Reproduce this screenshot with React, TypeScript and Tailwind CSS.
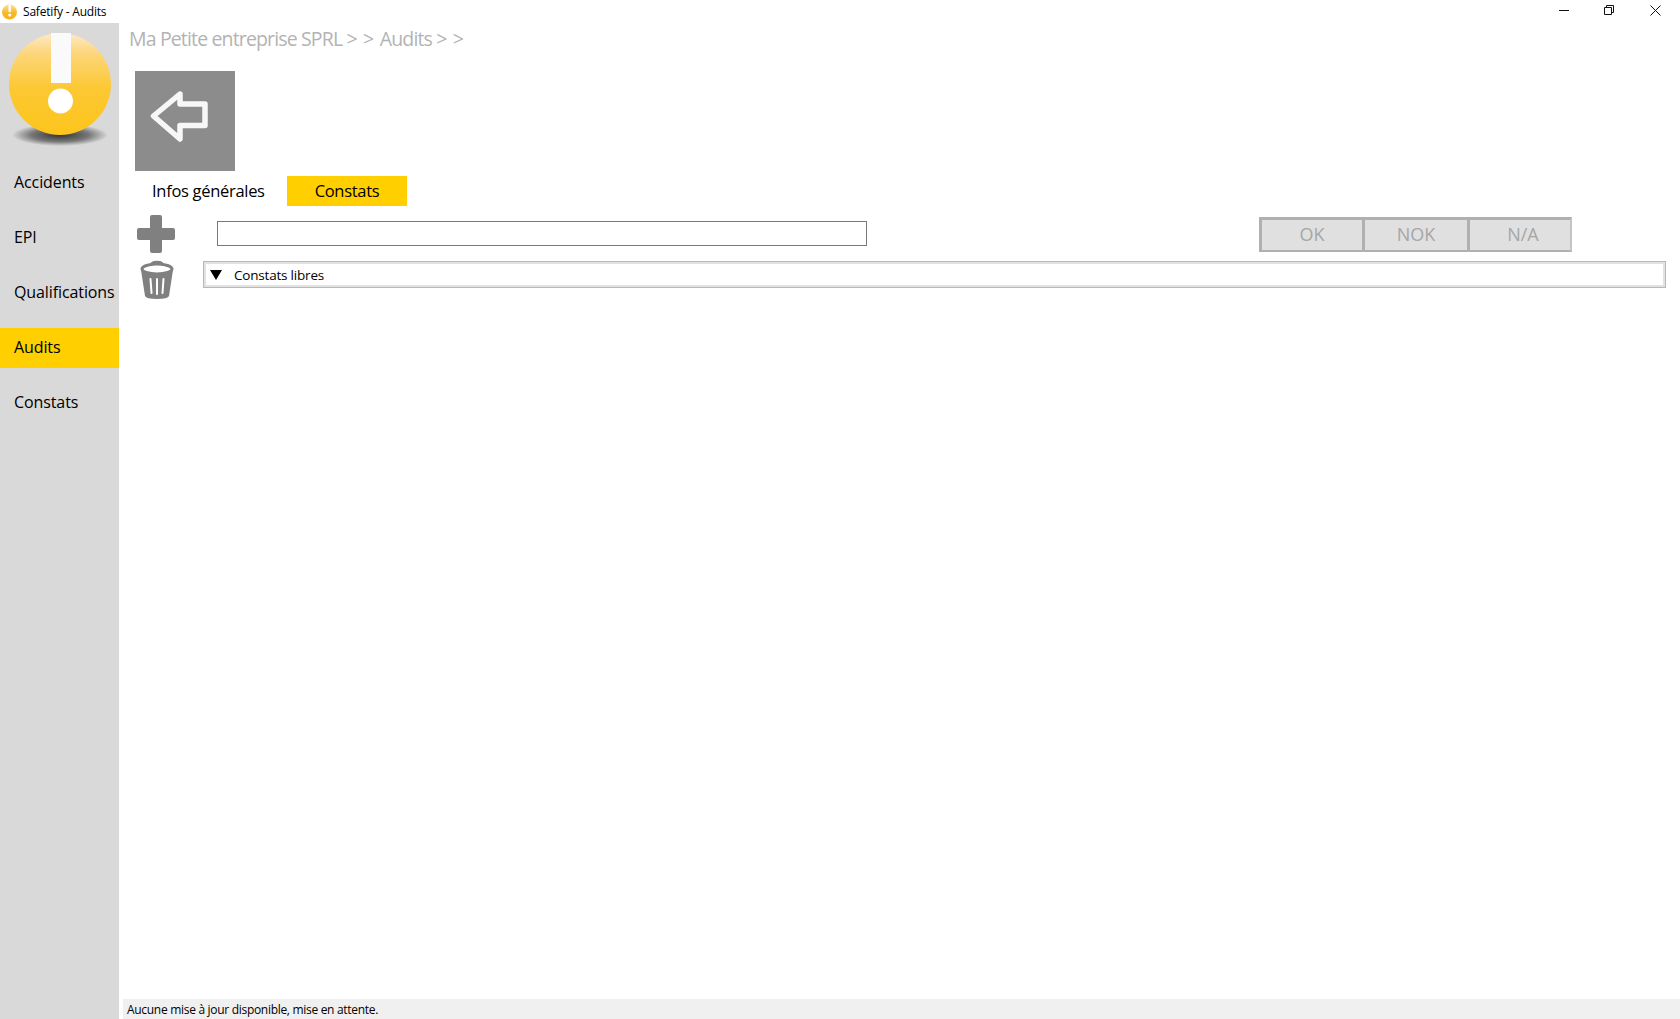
const font = { fontFamily: '"Open Sans", "Noto Sans", sans-serif' };

const navItems = ['Accidents', 'EPI', 'Qualifications', 'Audits', 'Constats'];

function LogoSmall() {
  return (
    <svg width="17" height="17" viewBox="0 0 17 17" className="ml-[1px]">
      <defs>
        <linearGradient id="small" x1="0" y1="0" x2="0" y2="1">
          <stop offset="0" stopColor="#fde3a5" />
          <stop offset="0.5" stopColor="#f9bb2c" />
          <stop offset="1" stopColor="#f5b01a" />
        </linearGradient>
      </defs>
      <circle cx="8.5" cy="9" r="7.5" fill="url(#small)" />
      <rect x="7.5" y="2" width="2.4" height="7" fill="#fff" />
      <circle cx="8.7" cy="12" r="1.6" fill="#fff" />
    </svg>
  );
}

function Logo() {
  return (
    <svg width="119" height="124" viewBox="0 0 119 124" className="block">
      <defs>
        <linearGradient id="ball" x1="0" y1="0" x2="0" y2="1">
          <stop offset="0" stopColor="#fde9c8" />
          <stop offset="0.2" stopColor="#fdd67a" />
          <stop offset="0.55" stopColor="#fcc832" />
          <stop offset="1" stopColor="#fcc51c" />
        </linearGradient>
        <radialGradient id="shadow" cx="0.5" cy="0.5" r="0.5">
          <stop offset="0" stopColor="#333" />
          <stop offset="0.6" stopColor="#777" />
          <stop offset="1" stopColor="#d9d9d9" />
        </radialGradient>
      </defs>
      <ellipse cx="60" cy="112" rx="48" ry="11" fill="url(#shadow)" />
      <circle cx="60" cy="61" r="51" fill="url(#ball)" />
      <rect x="51" y="10" width="20" height="50" fill="#fafafa" />
      <circle cx="60.5" cy="78" r="12.5" fill="#fff" />
    </svg>
  );
}

function BackArrow() {
  return (
    <svg width="100" height="100" viewBox="0 0 100 100">
      <path
        d="M45 23 L18.5 45 L45 68 L45 54.5 L70 54.5 L70 33 L45 33 Z"
        fill="none"
        stroke="#f7f7f7"
        strokeWidth="5.5"
        strokeLinejoin="round"
      />
    </svg>
  );
}

function Plus() {
  return (
    <svg width="38" height="38" viewBox="0 0 38 38">
      <path
        d="M15 0 H23 Q25 0 25 2 V13 H36 Q38 13 38 15 V23 Q38 25 36 25 H25 V36 Q25 38 23 38 H15 Q13 38 13 36 V25 H2 Q0 25 0 23 V15 Q0 13 2 13 H13 V2 Q13 0 15 0 Z"
        fill="#808080"
      />
    </svg>
  );
}

function Trash() {
  return (
    <svg width="34" height="40" viewBox="0 0 34 40">
      <path d="M11 6 Q11 2 17 2 Q23 2 23 6" fill="none" stroke="#808080" strokeWidth="2.5" />
      <ellipse cx="17" cy="9" rx="15" ry="5" fill="none" stroke="#808080" strokeWidth="3" />
      <path
        d="M1 10 Q3 14 17 14 Q31 14 33 10 L29 36 Q28 39 17 39 Q6 39 5 36 Z"
        fill="#808080"
      />
      <path d="M10.5 19 L11.5 33 M17 19 L17 34 M23.5 19 L22.5 33" stroke="#fff" strokeWidth="2" strokeLinecap="round" />
    </svg>
  );
}

function WindowControls() {
  return (
    <div className="flex items-center h-[20px]">
      <svg width="10" height="10" viewBox="0 0 10 10" className="mr-[35px]">
        <path d="M0 5.5 H10" stroke="#111" strokeWidth="1" />
      </svg>
      <svg width="10" height="10" viewBox="0 0 10 10" className="mr-[36px]">
        <path d="M2.5 2.5 V0.5 H9.5 V7.5 H7.5 M0.5 2.5 H7.5 V9.5 H0.5 Z" fill="none" stroke="#111" strokeWidth="1" />
      </svg>
      <svg width="11" height="11" viewBox="0 0 11 11" className="mr-[19px]">
        <path d="M0.5 0.5 L10.5 10.5 M10.5 0.5 L0.5 10.5" stroke="#111" strokeWidth="1" />
      </svg>
    </div>
  );
}

export default function App() {
  return (
    <div className="flex flex-col h-screen w-full bg-white overflow-hidden text-black" style={font}>
      <div className="flex items-start justify-between h-[23px] shrink-0">
        <div className="flex items-center h-[23px] gap-[5px]">
          <LogoSmall />
          <span className="text-[12px] tracking-[-0.2px] whitespace-pre">Safetify - Audits</span>
        </div>
        <WindowControls />
      </div>

      <div className="flex flex-1 min-h-0">
        <aside className="w-[119px] shrink-0 bg-[#d9d9d9] flex flex-col">
          <Logo />
          <nav className="flex flex-col gap-[15px] mt-[16px]">
            {navItems.map((item) => (
              <div
                key={item}
                className={`h-[40px] flex items-center pl-[14px] pb-[2px] text-[16px] tracking-[-0.1px] whitespace-nowrap ${
                  item === 'Audits' ? 'bg-[#ffcf00]' : ''
                }`}
              >
                {item}
              </div>
            ))}
          </nav>
        </aside>

        <main className="flex-1 min-w-0 flex flex-col">
          <h1 className="pl-[10px] h-[30px] mb-[18px] text-[19.5px] leading-[31px] font-normal text-[#b3b3b3] tracking-[-0.85px] whitespace-pre">
            {'Ma Petite entreprise SPRL '}
            <span className="tracking-[0.2px]">{'> > '}</span>
            {'Audits '}
            <span className="tracking-[0.2px]">{'> >'}</span>
          </h1>

          <div className="ml-[16px] w-[100px] h-[100px] bg-[#8c8c8c]">
            <BackArrow />
          </div>

          <div className="flex mt-[5px] ml-[16px] h-[30px] text-[16.5px] tracking-[-0.3px]">
            <div className="w-[152px] pl-[17px] flex items-center whitespace-nowrap">Infos générales</div>
            <div className="w-[120px] bg-[#ffcf00] flex items-center justify-center">Constats</div>
          </div>

          <div className="flex items-center h-[38px] mt-[9px] ml-[18px] mr-[108px]">
            <Plus />
            <div className="ml-[42px] mb-[1px] w-[650px] h-[25px] border border-[#7a7a7a] bg-white" />
            <div className="ml-auto flex h-[35px] w-[313px] border-[3px] border-r-2 border-b-2 border-[#b0b0b0] border-r-[#c4c4c4] bg-[#e0e0e0] text-[#a6a6a6] text-[18px] leading-none">
              <div className="w-[100px] pb-[2px] flex items-center justify-center">OK</div>
              <div className="w-[105px] pb-[2px] flex items-center justify-center border-l-[3px] border-[#b0b0b0]">NOK</div>
              <div className="flex-1 pl-[6px] pb-[2px] flex items-center justify-center border-l-[3px] border-[#b0b0b0]">N/A</div>
            </div>
          </div>

          <div className="flex items-start mt-[7px] ml-[21px] mr-[14px]">
            <Trash />
            <div className="ml-[29px] mt-[1px] flex-1 h-[27px] border border-[#b8b8b8]">
              <div className="h-full border-2 border-[#e2e2e2] flex items-center">
                <svg width="12" height="10" viewBox="0 0 12 10" className="ml-[4px]">
                  <path d="M0 0 H12 L6 10 Z" fill="#000" />
                </svg>
                <span className="ml-[12px] pt-[1px] text-[13.5px] tracking-[-0.2px]">Constats libres</span>
              </div>
            </div>
          </div>

          <div className="flex-1" />

          <div className="ml-[4px] h-[20px] bg-[#f0f0f0] flex items-center pl-[4px] pt-[1px] text-[12px] tracking-[-0.3px]">
            Aucune mise à jour disponible, mise en attente.
          </div>
        </main>
      </div>
    </div>
  );
}
